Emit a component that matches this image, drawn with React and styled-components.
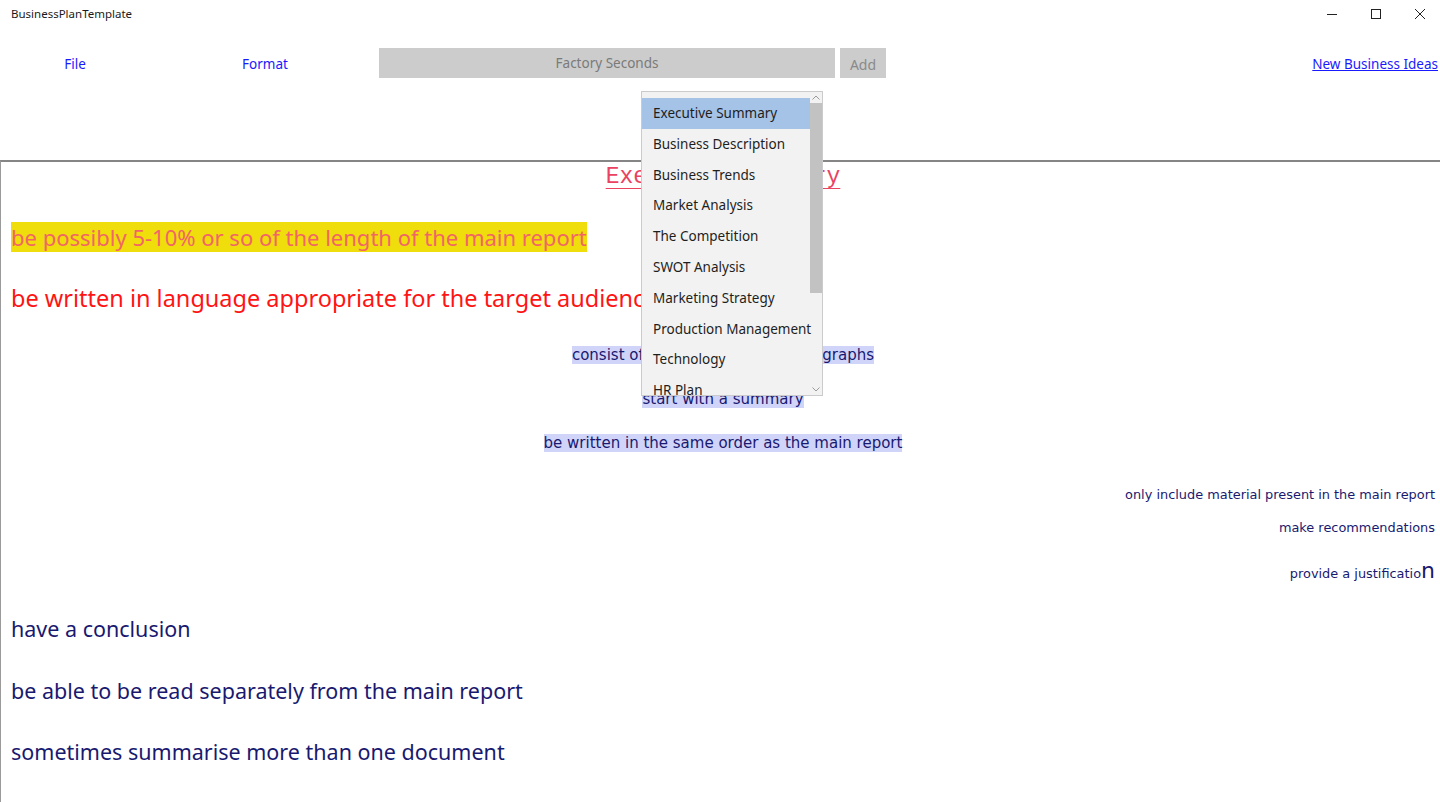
import React from 'react'
import styled, { createGlobalStyle } from 'styled-components'

const GlobalStyle = createGlobalStyle`
  html, body {
    margin: 0;
    padding: 0;
    background: #ffffff;
    overflow: hidden;
  }
  body {
    font-family: "Noto Sans", "Open Sans", sans-serif;
  }
`

const Window = styled.div`
  position: relative;
  display: flex;
  flex-direction: column;
  width: 1440px;
  height: 802px;
  background: #ffffff;
`

const TitleBar = styled.div`
  display: flex;
  align-items: center;
  height: 27px;
  padding-left: 11px;
`

const AppTitle = styled.div`
  flex: 1;
  font-size: 11.5px;
  color: #1a1a1a;
`

const Controls = styled.div`
  display: flex;
  margin-right: -2px;
`

const WindowButton = styled.div`
  width: 44px;
  height: 27px;
  display: flex;
  align-items: center;
  justify-content: center;
`

const Toolbar = styled.div`
  display: flex;
  align-items: center;
  height: 30px;
  margin-top: 21px;
`

const MenuItem = styled.div`
  width: ${props => props.width}px;
  padding-top: 2px;
  text-align: center;
  font-size: 13.5px;
  color: #1a1aff;
`

const SearchBox = styled.div`
  width: 456px;
  height: 30px;
  margin-left: -1px;
  background: #cccccc;
  color: #7a7a7a;
  font-size: 13.5px;
  display: flex;
  align-items: center;
  justify-content: center;
`

const AddButton = styled.div`
  width: 46px;
  height: 30px;
  margin-left: 5px;
  padding-top: 2px;
  box-sizing: border-box;
  background: #cccccc;
  color: #8a8a8a;
  font-size: 14px;
  display: flex;
  align-items: center;
  justify-content: center;
`

const IdeasLink = styled.div`
  margin-left: auto;
  margin-right: 2px;
  padding-top: 2px;
  font-size: 13.5px;
  color: #1a1aff;
  text-decoration: underline;
`

const Document = styled.div`
  flex: 1;
  margin-top: 82px;
  border-top: 2px solid #858585;
  border-left: 1px solid #9a9a9a;
  display: flex;
  flex-direction: column;
  padding: 0 5px 0 10px;
`

const Heading = styled.div`
  margin-top: 1px;
  text-align: center;
  font-family: "Liberation Mono", "Courier New", monospace;
  font-size: 23px;
  line-height: 28px;
  color: #ea4260;
  text-decoration: underline;
  text-decoration-thickness: 1px;
  text-underline-offset: 5px;
`

const Line = styled.div`
  margin-top: ${props => props.gap}px;
  text-align: ${props => props.align || 'left'};
  font-family: ${props => (props.verdana ? '"DejaVu Sans", Verdana, sans-serif' : '"Noto Sans", "Open Sans", sans-serif')};
  font-size: ${props => props.size}px;
  line-height: ${props => props.lh}px;
  color: ${props => props.color || '#191970'};
  white-space: nowrap;
`

const Mark = styled.span`
  background: ${props => props.bg};
`

const BigLetter = styled.span`
  font-size: 22px;
`

const Dropdown = styled.div`
  position: absolute;
  left: 641px;
  top: 91px;
  width: 180px;
  height: 303px;
  border: 1px solid #cbcbcb;
  background: #f2f2f2;
  display: flex;
  overflow: hidden;
`

const List = styled.div`
  flex: 1;
  min-width: 0;
  padding-top: 6px;
`

const Option = styled.div`
  height: 30.8px;
  line-height: 30.8px;
  padding-left: 11px;
  font-size: 13.5px;
  color: #1e1e1e;
  white-space: nowrap;
  background: ${props => (props.selected ? '#a5c3e7' : 'transparent')};
`

const ScrollBar = styled.div`
  flex-shrink: 0;
  width: 12px;
  display: flex;
  flex-direction: column;
`

const ScrollArrow = styled.div`
  height: 11px;
  display: flex;
  align-items: center;
  justify-content: center;
`

const ScrollThumb = styled.div`
  height: 190px;
  background: #c2c2c2;
`

const ScrollTrack = styled.div`
  flex: 1;
`

const sections = [
  'Executive Summary',
  'Business Description',
  'Business Trends',
  'Market Analysis',
  'The Competition',
  'SWOT Analysis',
  'Marketing Strategy',
  'Production Management',
  'Technology',
  'HR Plan',
]

function Chevron({ up }) {
  return (
    <svg width="8" height="5" viewBox="0 0 8 5">
      <path
        d={up ? 'M0.5 4.5 L4 1 L7.5 4.5' : 'M0.5 0.5 L4 4 L7.5 0.5'}
        fill="none"
        stroke="#9a9a9a"
        strokeWidth="1"
      />
    </svg>
  )
}

export default function App() {
  return (
    <Window>
      <GlobalStyle />
      <TitleBar>
        <AppTitle>BusinessPlanTemplate</AppTitle>
        <Controls>
          <WindowButton>
            <svg width="12" height="12" viewBox="0 0 12 12">
              <path d="M1 6.5 H11" stroke="#222" strokeWidth="1" />
            </svg>
          </WindowButton>
          <WindowButton>
            <svg width="12" height="12" viewBox="0 0 12 12">
              <rect x="1.5" y="1.5" width="9" height="9" fill="none" stroke="#222" strokeWidth="1" />
            </svg>
          </WindowButton>
          <WindowButton>
            <svg width="12" height="12" viewBox="0 0 12 12">
              <path d="M1 1 L11 11 M11 1 L1 11" stroke="#222" strokeWidth="1" />
            </svg>
          </WindowButton>
        </Controls>
      </TitleBar>

      <Toolbar>
        <MenuItem width={150}>File</MenuItem>
        <MenuItem width={230}>Format</MenuItem>
        <SearchBox>Factory Seconds</SearchBox>
        <AddButton>Add</AddButton>
        <IdeasLink>New Business Ideas</IdeasLink>
      </Toolbar>

      <Document>
        <Heading>Executive Summary</Heading>
        <Line gap={31} size={22} lh={30} color="#f26566">
          <Mark bg="#efdd0c">be possibly 5-10% or so of the length of the main report</Mark>
        </Line>
        <Line gap={30} size={23.5} lh={32} color="#ff1414">
          be written in language appropriate for the target audience
        </Line>
        <Line gap={30} size={15} lh={23} align="center" verdana>
          <Mark bg="#d1d4f9">consist of one or more short paragraphs</Mark>
        </Line>
        <Line gap={21} size={15} lh={23} align="center" verdana>
          <Mark bg="#d1d4f9">start with a summary</Mark>
        </Line>
        <Line gap={21} size={15} lh={23} align="center" verdana>
          <Mark bg="#d1d4f9">be written in the same order as the main report</Mark>
        </Line>
        <Line gap={31} size={12.9} lh={18} align="right" verdana>
          only include material present in the main report
        </Line>
        <Line gap={15} size={12.9} lh={18} align="right" verdana>
          make recommendations
        </Line>
        <Line gap={21} size={12.9} lh={26} align="right" verdana>
          provide a justificatio<BigLetter>n</BigLetter>
        </Line>
        <Line gap={27} size={21.5} lh={30}>
          have a conclusion
        </Line>
        <Line gap={32} size={21.5} lh={30}>
          be able to be read separately from the main report
        </Line>
        <Line gap={31} size={21.5} lh={30}>
          sometimes summarise more than one document
        </Line>
      </Document>

      <Dropdown>
        <List>
          {sections.map((name, i) => (
            <Option key={name} selected={i === 0}>
              {name}
            </Option>
          ))}
        </List>
        <ScrollBar>
          <ScrollArrow>
            <Chevron up />
          </ScrollArrow>
          <ScrollThumb />
          <ScrollTrack />
          <ScrollArrow>
            <Chevron />
          </ScrollArrow>
        </ScrollBar>
      </Dropdown>
    </Window>
  )
}
